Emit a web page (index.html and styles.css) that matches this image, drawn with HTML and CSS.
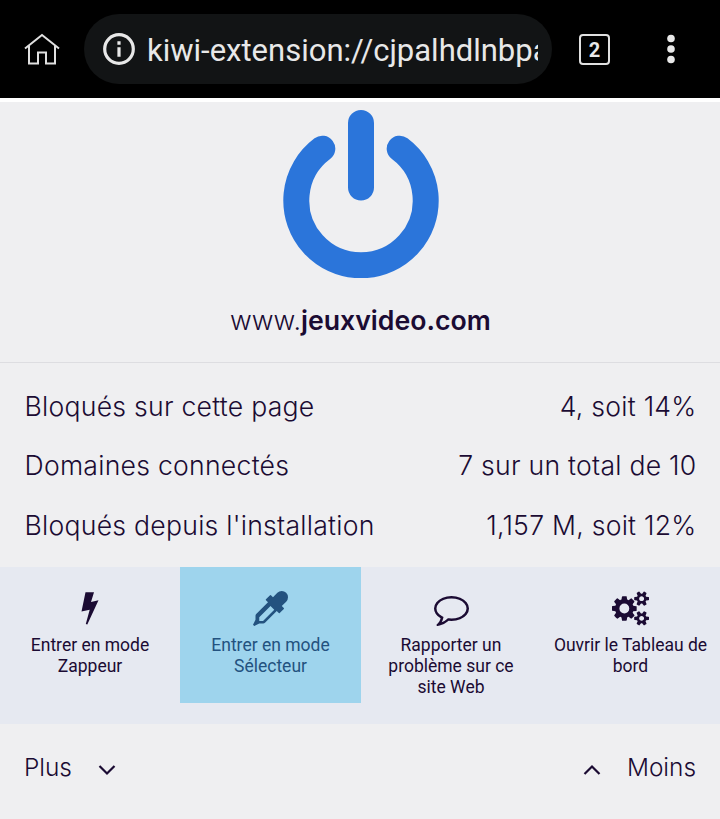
FILE: index.html
```html
<!DOCTYPE html>
<html lang="fr">
<head>
<meta charset="UTF-8">
<meta name="viewport" content="width=device-width, initial-scale=1.0">
<title>www.jeuxvideo.com</title>
<link rel="stylesheet" href="styles.css">
</head>
<body>

<!-- Browser bar -->
<header class="browser-bar">
  <svg class="home-icon" width="36" height="32" viewBox="0 0 36 32">
    <path d="M1 15.500L18 2l17 13.500M5 13v17.500h9v-11h8v11h9V13"/>
  </svg>
  <div class="address">
    <svg class="info-icon" width="32" height="32" viewBox="0 0 32 32">
      <circle cx="16" cy="16" r="14.300"/>
      <path d="M16 14.300v9.500M16 8.300v3.500"/>
    </svg>
    <span class="url">kiwi-extension://cjpalhdlnbpa</span>
  </div>
  <div class="tabs">2</div>
  <svg class="menu-icon" width="8" height="30" viewBox="0 0 8 30">
    <circle cx="4" cy="4.500" r="3.800"/>
    <circle cx="4" cy="15" r="3.800"/>
    <circle cx="4" cy="25.500" r="3.800"/>
  </svg>
</header>

<main class="popup">
  <section class="site">
    <svg class="power" width="156" height="168" viewBox="0 0 156 168">
      <path d="M39.300 38.700A64.700 64.700 0 1 0 116.700 38.700M78 13v64.500"/>
    </svg>
    <div class="hostname">www.<b>jeuxvideo.com</b></div>
  </section>

  <section class="stats">
    <div class="stat"><span>Bloqués sur cette page</span><span>4, soit 14%</span></div>
    <div class="stat"><span>Domaines connectés</span><span>7 sur un total de 10</span></div>
    <div class="stat"><span>Bloqués depuis l'installation</span><span>1,157 M, soit 12%</span></div>
  </section>

  <nav class="tools">
    <div class="tool">
      <svg width="18" height="34" viewBox="0 0 18 34">
        <path d="M4.500.7H13L10 10.400l7.500-1.700L6.300 33l-1.500-.5L8.700 18.200.5 20z"/>
      </svg>
      <span>Entrer en mode Zappeur</span>
    </div>
    <div class="tool active">
      <svg width="35" height="35" viewBox="0 0 1792 1792">
        <path d="M1698 94q94 94 94 226.500t-94 225.500l-225 223 104 104q10 10 10 23t-10 23l-210 210q-10 10-23 10t-23-10l-105-105-603 603q-37 37-90 37h-203l-256 128-64-64 128-256v-203q0-53 37-90l603-603-105-105q-10-10-10-23t10-23l210-210q10-10 23-10t23 10l104 104 223-225q93-94 225.500-94t226.500 94zm-1186 1442l576-576-192-192-576 576v192h192z"/>
      </svg>
      <span>Entrer en mode Sélecteur</span>
    </div>
    <div class="tool">
      <svg width="35" height="35" viewBox="0 0 1792 1792">
        <path d="M896 384q-204 0-381.500 69.500t-282 187.500-104.500 255q0 112 71.500 213.500t201.500 175.500l87 50-27 96q-24 91-70 172 152-63 275-171l43-38 57 6q69 8 130 8 204 0 381.500-69.500t282-187.500 104.500-255-104.500-255-282-187.500-381.500-69.500zm896 512q0 174-120 321.500t-326 233-450 85.500q-70 0-145-8-198 175-460 242-49 14-114 22h-5q-15 0-27-10.500t-16-27.500v-1q-3-4-.5-12t2-10 4.500-9.500l6-9 7-8.500 8-9q7-8 31-34.500t34.500-38 31-39.500 32.500-51 27-59 26-76q-157-89-247.500-220t-90.500-281q0-174 120-321.500t326-233 450-85.500 450 85.500 326 233 120 321.500z"/>
      </svg>
      <span>Rapporter un problème sur ce site Web</span>
    </div>
    <div class="tool">
      <svg width="37" height="35" viewBox="0 0 1920 1792">
        <path d="M896 896q0-106-75-181t-181-75-181 75-75 181 75 181 181 75 181-75 75-181zm768 512q0-52-38-90t-90-38-90 38-38 90q0 53 37.500 90.500t90.500 37.500 90.500-37.500 37.500-90.500zm0-1024q0-52-38-90t-90-38-90 38-38 90q0 53 37.500 90.500t90.500 37.500 90.500-37.500 37.500-90.500zm-384 421v185q0 10-7 19.500t-16 10.500l-155 24q-11 35-32 76 34 48 90 115 7 11 7 20 0 12-7 19-23 30-82.500 89.500t-78.500 59.500q-11 0-21-7l-115-90q-37 19-77 31-11 108-23 155-7 24-30 24h-186q-11 0-20-7.500t-10-17.500l-23-153q-34-10-75-31l-118 89q-7 7-20 7-11 0-21-8-144-133-144-160 0-9 7-19 10-14 41-53t47-61q-23-44-35-82l-152-24q-10-1-17-9.500t-7-19.500v-185q0-10 7-19.500t16-10.500l155-24q11-35 32-76-34-48-90-115-7-11-7-20 0-12 7-20 22-30 82-89t79-59q11 0 21 7l115 90q34-18 77-32 11-108 23-154 7-24 30-24h186q11 0 20 7.500t10 17.500l23 153q34 10 75 31l118-89q8-7 20-7 11 0 21 8 144 133 144 160 0 8-7 19-12 16-42 54t-45 60q23 48 34 82l152 23q10 2 17 10.500t7 19.500zm640 533v140q0 16-149 31-12 27-30 52 51 113 51 138 0 4-4 7-122 71-124 71-8 0-46-47t-52-68q-20 2-30 2t-30-2q-14 21-52 68t-46 47q-2 0-124-71-4-3-4-7 0-25 51-138-18-25-30-52-149-15-149-31v-140q0-16 149-31 13-29 30-52-51-113-51-138 0-4 4-7 4-2 35-20t59-34 30-16q8 0 46 46.500t52 67.500q20-2 30-2t30 2q51-71 92-112l6-2q4 0 124 70 4 3 4 7 0 25-51 138 17 23 30 52 149 15 149 31zm0-1024v140q0 16-149 31-12 27-30 52 51 113 51 138 0 4-4 7-122 71-124 71-8 0-46-47t-52-68q-20 2-30 2t-30-2q-14 21-52 68t-46 47q-2 0-124-71-4-3-4-7 0-25 51-138-18-25-30-52-149-15-149-31v-140q0-16 149-31 13-29 30-52-51-113-51-138 0-4 4-7 4-2 35-20t59-34 30-16q8 0 46 46.500t52 67.500q20-2 30-2t30 2q51-71 92-112l6-2q4 0 124 70 4 3 4 7 0 25-51 138 17 23 30 52 149 15 149 31z"/>
      </svg>
      <span>Ouvrir le Tableau de bord</span>
    </div>
  </nav>

  <footer class="more-less">
    <div class="toggle">
      <span>Plus</span>
      <svg class="chevron" width="18" height="12" viewBox="0 0 18 12"><path d="M1.500 2L9 9.500 16.500 2"/></svg>
    </div>
    <div class="toggle">
      <svg class="chevron" width="18" height="12" viewBox="0 0 18 12"><path d="M1.500 10L9 2.500l7.500 7.500"/></svg>
      <span>Moins</span>
    </div>
  </footer>
</main>

</body>
</html>
```
FILE: styles.css
```css
* {
  box-sizing: border-box;
}

body {
  margin: 0;
  background-color: #efeff1;
  color: #1b0b33;
  font-family: Inter, sans-serif;
  font-size: 26.6px;
  font-weight: 350;
}

/* Browser bar */
.browser-bar {
  display: flex;
  align-items: center;
  height: 98px;
  padding-left: 24px;
  background-color: #000;
  color: #e8e8e8;
  font-family: Roboto, sans-serif;
}

.home-icon {
  fill: none;
  stroke: #e0e0e0;
  stroke-width: 2;
}

.address {
  display: flex;
  align-items: center;
  width: 468px;
  height: 70px;
  margin-left: 24px;
  padding: 0 14px 0 19px;
  border-radius: 35px;
  background-color: #121415;
}

.info-icon {
  flex: none;
  fill: none;
  stroke: #e8e8e8;
  stroke-width: 3.2;
}

.url {
  margin-left: 12px;
  padding-top: 3px;
  overflow: hidden;
  font-size: 31px;
  font-weight: 400;
  line-height: 40px;
  white-space: nowrap;
}

.tabs {
  width: 31px;
  height: 31px;
  margin-left: 27px;
  border: 2px solid #e0e0e0;
  border-radius: 4px;
  font-size: 20px;
  font-weight: 700;
  line-height: 28px;
  text-align: center;
}

.menu-icon {
  margin-left: 57px;
  fill: #e8e8e8;
}

/* Site and power button */
.popup {
  border-top: 4px solid #fff;
}

.site {
  display: flex;
  flex-direction: column;
  align-items: center;
  height: 261px;
  padding-top: 8px;
  border-bottom: 1px solid #dddde1;
}

.power {
  margin-left: 2px;
  fill: none;
  stroke: #2b75da;
  stroke-width: 26;
  stroke-linecap: round;
}

.hostname {
  margin-top: 22px;
  padding-left: 1px;
  font-size: 26.7px;
  line-height: 40px;
}

.hostname b {
  font-weight: 600;
}

/* Counters */
.stats {
  height: 204px;
  padding: 14px 23.500px 0 24.500px;
  font-feature-settings: "calt" 0, "liga" 0, "dlig" 0;
  letter-spacing: 0.25px;
}

.stat {
  display: flex;
  justify-content: space-between;
  line-height: 59.4px;
}

/* Tools */
.tools {
  display: grid;
  grid-template-columns: 180px 181px 180px 1fr;
  align-items: start;
  height: 157px;
  background-color: #e6e9f1;
}

.tool {
  display: flex;
  flex-direction: column;
  align-items: center;
  height: 136px;
  padding: 24px 12px 0;
  font-family: Roboto, sans-serif;
  font-size: 17.5px;
  font-weight: 400;
  line-height: 21px;
  text-align: center;
}

.tool:last-child {
  padding: 24px 6px 0;
}

.tool svg {
  height: 35px;
  margin-bottom: 9px;
  fill: #1b0b33;
}

.active {
  background-color: #9ed4ed;
  color: #23527f;
}

.active svg {
  fill: #23527f;
}

/* More / less */
.more-less {
  display: flex;
  justify-content: space-between;
  padding: 23px 24px;
  font-size: 24.4px;
  line-height: 41px;
}

.toggle {
  display: flex;
  align-items: center;
  gap: 26px;
}

.chevron {
  margin-top: 5px;
  fill: none;
  stroke: #1b0b33;
  stroke-width: 2.2;
}
```
